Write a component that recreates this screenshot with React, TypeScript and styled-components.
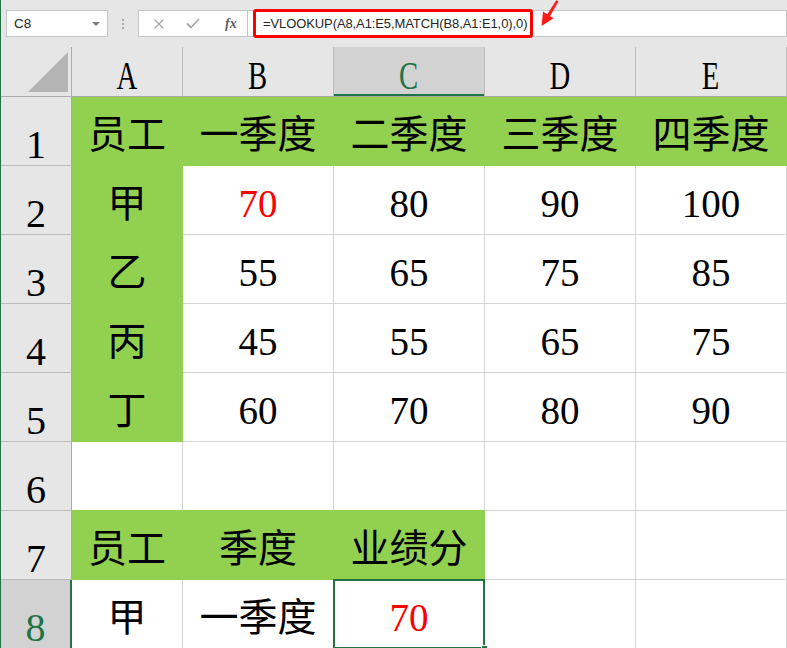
import React from 'react';
import styled, { createGlobalStyle, css } from 'styled-components';

const FILL = '#92d050';
const XL_GREEN = '#217346';
const GRID = '#d4d4d4';
const HEAD_LINE = '#ababab';
const HEAD_BG = '#e6e6e6';
const HEAD_SEL = '#d2d2d2';

const GlobalStyle = createGlobalStyle`
  html, body { margin: 0; padding: 0; background: #fff; }
  #root { width: 787px; height: 648px; overflow: hidden; }
`;

const Window = styled.div`
  width: 787px;
  height: 648px;
  box-sizing: border-box;
  border-left: 1px solid ${XL_GREEN};
  background: ${HEAD_BG};
  display: flex;
  flex-direction: column;
  overflow: hidden;
`;

const FormulaBar = styled.div`
  height: 47px;
  flex: none;
  display: flex;
  align-items: center;
  padding-left: 5px;
  font-family: "Liberation Sans", Arial, sans-serif;
  font-size: 13px;
  color: #262626;
`;

const Box = styled.div`
  height: 27px;
  box-sizing: border-box;
  border: 1px solid #c6c6c6;
  background: #fff;
  display: flex;
  align-items: center;
`;

const NameBox = styled(Box)`
  width: 102px;
  justify-content: space-between;
  padding: 0 7px 0 7px;
  font-size: 13.5px;
`;

const Caret = styled.span`
  width: 0;
  height: 0;
  border-left: 4px solid transparent;
  border-right: 4px solid transparent;
  border-top: 4px solid #7a7a7a;
`;

const Grip = styled.div`
  width: 30px;
  display: flex;
  flex-direction: column;
  align-items: center;
  gap: 2px;
`;

const GripDot = styled.span`
  width: 2px;
  height: 2px;
  background: #a6a6a6;
`;

const FxBox = styled(Box)`
  width: 110px;
  padding-left: 14px;
  gap: 21px;
`;

const FxLabel = styled.span`
  font-family: "Liberation Serif", "Times New Roman", serif;
  font-style: italic;
  font-weight: bold;
  font-size: 14px;
  color: #606060;
  margin-left: 4px;
`;

const FormulaInput = styled(Box)`
  flex: 1;
  border-left: none;
  padding-left: 5px;
  position: relative;
`;

const Highlight = styled.div`
  height: 29px;
  margin: -1px 0;
  box-sizing: border-box;
  border: 3px solid #ff0000;
  border-radius: 3px;
  display: flex;
  align-items: center;
  padding: 0 3px 0 7px;
  white-space: nowrap;
  letter-spacing: -0.1px;
`;

const Pointer = styled.svg`
  position: absolute;
  left: 290px;
  top: -11px;
`;

const Grid = styled.div`
  flex: none;
  display: grid;
  grid-template-columns: 71px 111px repeat(4, 151px);
  grid-template-rows: 50px repeat(8, 69px);
`;

const Corner = styled.div`
  box-sizing: border-box;
  background: ${HEAD_BG};
  border-right: 1px solid ${HEAD_LINE};
  border-bottom: 1px solid ${HEAD_LINE};
  display: flex;
  align-items: flex-end;
  justify-content: flex-end;
  padding: 0 3px 4px 0;
`;

const CornerTriangle = styled.span`
  width: 0;
  height: 0;
  border-left: 40px solid transparent;
  border-bottom: 40px solid #b4b4b4;
`;

const headText = css`
  font-family: "Liberation Serif", "Times New Roman", serif;
  display: flex;
  align-items: flex-end;
  justify-content: center;
  box-sizing: border-box;
`;

const ColHead = styled.div<{ $sel?: boolean }>`
  ${headText}
  line-height: 1;
  font-size: 41px;
  background: ${(p) => (p.$sel ? HEAD_SEL : HEAD_BG)};
  color: ${(p) => (p.$sel ? XL_GREEN : '#000')};
  border-right: 1px solid #bcbcbc;
  border-bottom: 1px solid ${HEAD_LINE};
  ${(p) => p.$sel && css`box-shadow: inset 0 -2px 0 ${XL_GREEN};`}
`;

const Letter = styled.span`
  display: inline-block;
  transform: scaleX(0.7);
`;

const RowHead = styled.div<{ $sel?: boolean }>`
  ${headText}
  line-height: 0.9;
  padding-bottom: 2px;
  font-size: 40px;
  background: ${(p) => (p.$sel ? HEAD_SEL : HEAD_BG)};
  color: ${(p) => (p.$sel ? XL_GREEN : '#000')};
  border-right: ${(p) => (p.$sel ? `2px solid ${XL_GREEN}` : `1px solid ${HEAD_LINE}`)};
  border-bottom: 1px solid #bcbcbc;
`;

const Cell = styled.div<{ $fill?: boolean; $red?: boolean; $right: string; $bottom: string; $sel?: boolean }>`
  position: relative;
  box-sizing: border-box;
  background: ${(p) => (p.$fill ? FILL : '#fff')};
  border-right: 1px solid ${(p) => p.$right};
  border-bottom: 1px solid ${(p) => p.$bottom};
  display: flex;
  align-items: center;
  justify-content: center;
  padding-top: 6px;
  font-family: "Liberation Serif", "Noto Sans CJK SC", serif;
  font-size: 39px;
  line-height: 1;
  color: ${(p) => (p.$red ? '#ff0000' : '#000')};
  ${(p) =>
    p.$sel &&
    css`
      &::after {
        content: '';
        position: absolute;
        top: -1px;
        left: -1px;
        right: -1px;
        bottom: -1px;
        border: 2px solid ${XL_GREEN};
        z-index: 2;
      }
      &::before {
        content: '';
        position: absolute;
        right: -4px;
        bottom: -4px;
        width: 5px;
        height: 5px;
        background: ${XL_GREEN};
        border: 1px solid #fff;
        z-index: 3;
      }
    `}
`;

type C = { t?: string; g?: boolean; r?: boolean; s?: boolean };

const data: C[][] = [
  [
    { t: '员工', g: true },
    { t: '一季度', g: true },
    { t: '二季度', g: true },
    { t: '三季度', g: true },
    { t: '四季度', g: true },
  ],
  [{ t: '甲', g: true }, { t: '70', r: true }, { t: '80' }, { t: '90' }, { t: '100' }],
  [{ t: '乙', g: true }, { t: '55' }, { t: '65' }, { t: '75' }, { t: '85' }],
  [{ t: '丙', g: true }, { t: '45' }, { t: '55' }, { t: '65' }, { t: '75' }],
  [{ t: '丁', g: true }, { t: '60' }, { t: '70' }, { t: '80' }, { t: '90' }],
  [{}, {}, {}, {}, {}],
  [{ t: '员工', g: true }, { t: '季度', g: true }, { t: '业绩分', g: true }, {}, {}],
  [{ t: '甲' }, { t: '一季度' }, { t: '70', r: true, s: true }, {}, {}],
];

const cols = ['A', 'B', 'C', 'D', 'E'];
const selCol = 2;
const selRow = 7;

export default function App() {
  return (
    <>
      <GlobalStyle />
      <Window>
        <FormulaBar>
          <NameBox>
            <span>C8</span>
            <Caret />
          </NameBox>
          <Grip>
            <GripDot />
            <GripDot />
            <GripDot />
          </Grip>
          <FxBox>
            <svg width="12" height="12" viewBox="0 0 12 12">
              <path d="M1.5 1.5 L10.5 10.5 M10.5 1.5 L1.5 10.5" stroke="#a8a8a8" strokeWidth="1.3" fill="none" />
            </svg>
            <svg width="14" height="11" viewBox="0 0 14 11">
              <path d="M1 5.5 L5 9.5 L13 1" stroke="#a8a8a8" strokeWidth="1.8" fill="none" />
            </svg>
            <FxLabel>fx</FxLabel>
          </FxBox>
          <FormulaInput>
            <Highlight>=VLOOKUP(A8,A1:E5,MATCH(B8,A1:E1,0),0)</Highlight>
            <Pointer width="24" height="30" viewBox="0 0 24 30">
              <path d="M20.5 1.2 L11.6 17 L8.8 15.3 L18.2 0.2 Z" fill="#ff1a1a" />
              <path d="M3.5 26 L5 11.5 L15.5 18.3 Z" fill="#ff1a1a" />
            </Pointer>
          </FormulaInput>
        </FormulaBar>
        <Grid>
          <Corner>
            <CornerTriangle />
          </Corner>
          {cols.map((c, i) => (
            <ColHead key={c} $sel={i === selCol}>
              <Letter>{c}</Letter>
            </ColHead>
          ))}
          {data.map((row, ri) => (
            <React.Fragment key={ri}>
              <RowHead $sel={ri === selRow}>{ri + 1}</RowHead>
              {row.map((cell, ci) => {
                const right = row[ci + 1];
                const below = data[ri + 1]?.[ci];
                const rightColor = cell.g || right?.g ? FILL : GRID;
                const bottomColor = cell.g || below?.g ? FILL : GRID;
                return (
                  <Cell
                    key={ci}
                    $fill={cell.g}
                    $red={cell.r}
                    $sel={cell.s}
                    $right={rightColor}
                    $bottom={bottomColor}
                  >
                    {cell.t}
                  </Cell>
                );
              })}
            </React.Fragment>
          ))}
        </Grid>
      </Window>
    </>
  );
}
